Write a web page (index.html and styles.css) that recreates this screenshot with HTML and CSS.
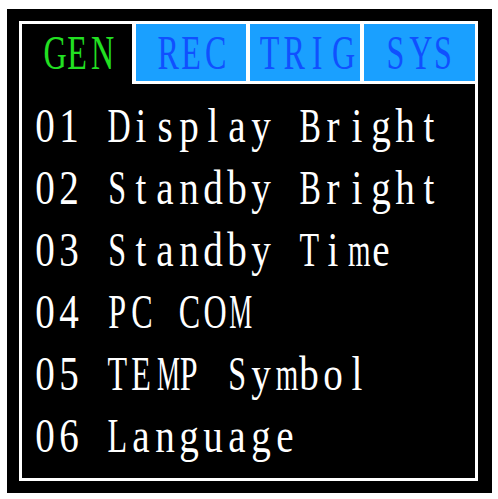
FILE: index.html
```html
<!DOCTYPE html>
<html>
<head>
<meta charset="utf-8">
<link rel="stylesheet" href="styles.css">
</head>
<body>
<div class="frame">
  <div class="panel">
    <div class="tabs">
      <div class="tab active"><span class="mono">GEN</span></div>
      <div class="tab"><span class="mono">REC</span></div>
      <div class="tab"><span class="mono">TRIG</span></div>
      <div class="tab"><span class="mono">SYS</span></div>
    </div>
    <div class="list">
      <div class="row"><span class="mono">01 Display Bright</span></div>
      <div class="row"><span class="mono">02 Standby Bright</span></div>
      <div class="row"><span class="mono">03 Standby Time</span></div>
      <div class="row"><span class="mono">04 PC COM</span></div>
      <div class="row"><span class="mono">05 TEMP Symbol</span></div>
      <div class="row"><span class="mono">06 Language</span></div>
    </div>
  </div>
</div>
<script src="script.js"></script>
</body>
</html>
```

FILE: styles.css
```css
html, body {
  margin: 0;
  padding: 0;
  background: #ffffff;
}
.frame {
  box-sizing: border-box;
  margin: 9px 0 0 7px;
  width: 485px;
  height: 484px;
  background: #000000;
  padding: 12px 14px 12px 12px;
}
.panel {
  box-sizing: border-box;
  width: 459px;
  height: 460px;
  border: 3px solid #ffffff;
  background: #000000;
  display: flex;
  flex-direction: column;
  overflow: hidden;
}
.tabs {
  display: grid;
  grid-template-columns: 110px 110px 110px 1fr;
  column-gap: 4px;
  height: 60px;
  background: #ffffff;
  align-items: start;
}
.tab {
  height: 57px;
  background: #1aa0ff;
  color: #1050ff;
  display: flex;
  align-items: center;
  justify-content: center;
}
.tab.active {
  height: 60px;
  background: #000000;
  color: #22e022;
  padding-bottom: 3px;
  box-sizing: border-box;
}
.mono {
  display: inline-block;
  font-family: "Liberation Serif", serif;
  font-size: 46px;
  white-space: nowrap;
  transform: scale(0.85, 1.05);
}
.mono .c {
  display: inline-block;
  width: 28.24px;
  text-align: center;
  white-space: pre;
}
.mono .c.up {
  transform: scaleX(0.82);
}
.mono .c.wide {
  transform: scaleX(0.66);
}
.mono .c.wlow {
  transform: scaleX(0.74);
}
.tab .mono {
  line-height: 57px;
  transform-origin: center;
}
.list {
  padding: 11px 0 0 11px;
  color: #ffffff;
}
.row {
  height: 62px;
  white-space: nowrap;
}
.row .mono {
  line-height: 62px;
  transform-origin: left center;
}
```

FILE: script.js
```js
document.querySelectorAll('.mono').forEach(function (el) {
  var text = el.textContent;
  el.textContent = '';
  for (var i = 0; i < text.length; i++) {
    var ch = text[i];
    var s = document.createElement('span');
    s.className = 'c';
    if (ch === 'M' || ch === 'W') {
      s.className += ' wide';
    } else if (ch === 'm' || ch === 'w') {
      s.className += ' wlow';
    } else if (/[A-Z]/.test(ch)) {
      s.className += ' up';
    }
    s.textContent = ch;
    el.appendChild(s);
  }
});
```
